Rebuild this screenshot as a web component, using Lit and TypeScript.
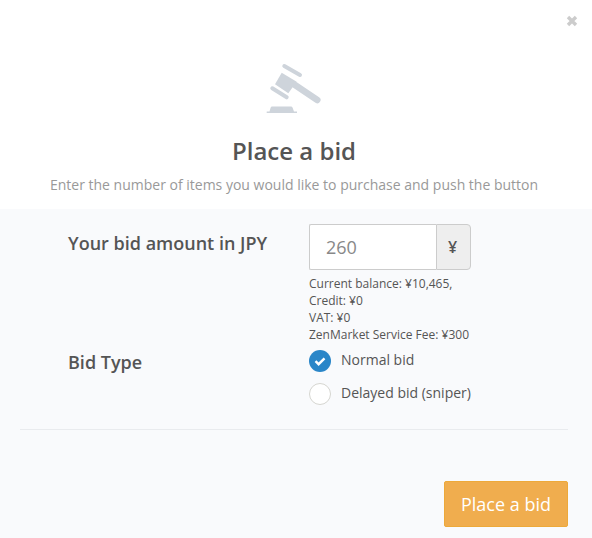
import { LitElement, html, css } from "lit";
import { customElement } from "lit/decorators.js";

@customElement("app-root")
export class AppRoot extends LitElement {
  static styles = css`
    :host { display: block; width: 592px; height: 538px; font-family: "Open Sans", sans-serif; color: #555; background: #fff; overflow: hidden; position: relative; }
    .close { position: absolute; top: 15px; right: 14px; width: 12px; height: 12px; display: block; }
    .head { height: 209px; box-sizing: border-box; padding: 64px 4px 0 0; display: flex; flex-direction: column; align-items: center; }
    .gavel { width: 56px; height: 52px; display: block; overflow: visible; margin-left: 4px; }
    h1 { margin: 19px 0 0; font-size: 24px; line-height: 32px; font-weight: 600; color: #555; }
    .sub { margin: 8px 0 0; font-size: 14px; line-height: 20px; color: #999; }
    .body { height: 329px; box-sizing: border-box; background: #f9fafc; padding: 15px 24px 11px 20px; display: flex; flex-direction: column; }
    .row { display: grid; grid-template-columns: 289px 1fr; }
    .label { padding-left: 48px; font-size: 18px; line-height: 24px; font-weight: 600; color: #555; }
    .amount .label { padding-top: 7px; }
    .group { display: flex; width: 162px; height: 46px; }
    .input { width: 127px; box-sizing: border-box; border: 1px solid #ccc; border-right: 0; background: #fff; font-size: 18px; color: #888; display: flex; align-items: center; padding-left: 16px; border-radius: 2px 0 0 2px; }
    .addon { flex: 1; box-sizing: border-box; border: 1px solid #ccc; background: #eee; border-radius: 0 4px 4px 0; display: flex; align-items: center; justify-content: center; padding-right: 2px; font-size: 16px; font-weight: 600; color: #555; }
    .info { margin-top: 5px; font-size: 12px; line-height: 17px; color: #555; white-space: nowrap; }
    .type { margin-top: 6px; }
    .type .label { padding-top: 1px; }
    .opts { display: flex; flex-direction: column; gap: 11px; }
    .opt { display: flex; align-items: center; gap: 10px; font-size: 14px; line-height: 22px; color: #555; height: 22px; }
    .radio { width: 22px; height: 22px; flex: none; display: block; margin-top: 2px; }
    .rule { height: 1px; background: #e9ebee; margin-top: 25px; }
    .foot { margin-top: auto; display: flex; justify-content: flex-end; }
    .btn { width: 124px; height: 46px; box-sizing: border-box; border: 1px solid #eda93a; border-radius: 2px; background: #f0ad4e; color: #fff; font: 400 18px "Open Sans", sans-serif; padding: 0; }
  `;

  render() {
    return html`
      <svg class="close" viewBox="0 0 12 12"><path d="M2 2l8 8M10 2l-8 8" stroke="#ccc" stroke-width="3.4"/></svg>
      <div class="head">
        <svg class="gavel" viewBox="0 0 56 52">
          <g fill="#ced4db" stroke="#ced4db" stroke-linecap="round">
            <path d="M13.700 8.700l15 9-8.400 11.600-13.300-9z" stroke="none"/>
            <path d="M16.300 2l15.700 9" fill="none" stroke-width="4"/>
            <path d="M4.300 24.300l14.400 9" fill="none" stroke-width="4"/>
            <path d="M27 21l22.300 15" fill="none" stroke-width="6.500"/>
            <path d="M4 42.500h19c.8 0 1.300.4 1.600 1.200L26 47.500h3V49H-1.300v-1.500H1.500L2.600 43.700c.3-.8.700-1.200 1.400-1.200z" stroke="none"/>
          </g>
        </svg>
        <h1>Place a bid</h1>
        <p class="sub">Enter the number of items you would like to purchase and push the button</p>
      </div>
      <div class="body">
        <div class="row amount">
          <div class="label">Your bid amount in JPY</div>
          <div>
            <div class="group"><div class="input">260</div><div class="addon">¥</div></div>
            <div class="info">Current balance: ¥10,465,<br>Credit: ¥0<br>VAT: ¥0<br>ZenMarket Service Fee: ¥300</div>
          </div>
        </div>
        <div class="row type">
          <div class="label">Bid Type</div>
          <div class="opts">
            <div class="opt">
              <svg class="radio" viewBox="0 0 22 22"><circle cx="11" cy="11" r="11" fill="#2a86c8"/><path d="M6.500 11.200l3.100 3 5.900-5.900" fill="none" stroke="#fff" stroke-width="2.400"/></svg>
              Normal bid
            </div>
            <div class="opt">
              <svg class="radio" viewBox="0 0 22 22"><circle cx="11" cy="11" r="10.500" fill="#fff" stroke="#d5d5d0"/></svg>
              Delayed bid (sniper)
            </div>
          </div>
        </div>
        <div class="rule"></div>
        <div class="foot"><button class="btn">Place a bid</button></div>
      </div>
    `;
  }
}
